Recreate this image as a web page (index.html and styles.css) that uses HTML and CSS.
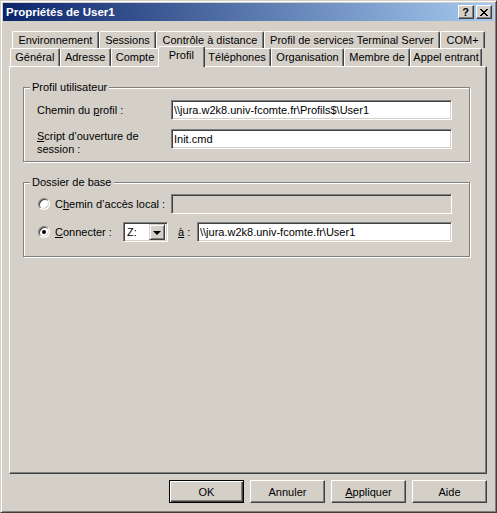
FILE: index.html
```html
<!DOCTYPE html>
<html lang="fr">
<head>
<meta charset="utf-8">
<title>Propriétés de User1</title>
<link rel="stylesheet" href="styles.css">
</head>
<body>
<div class="window">
  <div class="titlebar">
    <span class="title">Propriétés de User1</span>
    <div class="capbtns">
      <span class="capbtn help">?</span>
      <span class="capbtn close">
        <svg width="8" height="7" viewBox="0 0 8 7" shape-rendering="crispEdges" aria-hidden="true">
          <rect x="0" y="0" width="2" height="1"/><rect x="6" y="0" width="2" height="1"/>
          <rect x="1" y="1" width="2" height="1"/><rect x="5" y="1" width="2" height="1"/>
          <rect x="2" y="2" width="4" height="1"/>
          <rect x="3" y="3" width="2" height="1"/>
          <rect x="2" y="4" width="4" height="1"/>
          <rect x="1" y="5" width="2" height="1"/><rect x="5" y="5" width="2" height="1"/>
          <rect x="0" y="6" width="2" height="1"/><rect x="6" y="6" width="2" height="1"/>
        </svg>
      </span>
    </div>
  </div>

  <div class="client">
    <div class="tabrow back">
      <span class="tab">Environnement</span>
      <span class="tab">Sessions</span>
      <span class="tab">Contrôle à distance</span>
      <span class="tab">Profil de services Terminal Server</span>
      <span class="tab">COM+</span>
    </div>
    <div class="tabrow front">
      <span class="tab">Général</span>
      <span class="tab">Adresse</span>
      <span class="tab">Compte</span>
      <span class="tab sel">Profil</span>
      <span class="tab">Téléphones</span>
      <span class="tab">Organisation</span>
      <span class="tab">Membre de</span>
      <span class="tab narrow">Appel entrant</span>
    </div>

    <div class="panel">
      <div class="group g1">
        <div class="gtitle">Profil utilisateur</div>
        <div class="row">
          <span class="lbl">Chemin du <u>p</u>rofil :</span>
          <div class="field">\\jura.w2k8.univ-fcomte.fr\Profils$\User1</div>
        </div>
        <div class="row">
          <span class="lbl top"><u>S</u>cript d’ouverture de<br>session :</span>
          <div class="field">Init.cmd</div>
        </div>
      </div>

      <div class="group g2">
        <div class="gtitle">Dossier de base</div>
        <div class="row">
          <span class="radio"></span>
          <span class="rlbl">C<u>h</u>emin d’accès local :</span>
          <div class="field disabled"></div>
        </div>
        <div class="row r2">
          <span class="radio checked"></span>
          <span class="rlbl conn"><u>C</u>onnecter :</span>
          <div class="combo">
            <span class="combo-text">Z:</span>
            <span class="ddbtn"><span class="arrow"></span></span>
          </div>
          <span class="alabel"><u>à</u> :</span>
          <div class="field short">\\jura.w2k8.univ-fcomte.fr\User1</div>
        </div>
      </div>
    </div>

    <div class="buttons">
      <button class="btn default">OK</button>
      <button class="btn">Annuler</button>
      <button class="btn"><u>A</u>ppliquer</button>
      <button class="btn">Aide</button>
    </div>
  </div>
</div>
</body>
</html>
```

FILE: styles.css
```css
* { box-sizing: border-box; }
html, body { margin: 0; padding: 0; background: #D4D0C8; }
body {
  font-family: "Liberation Sans", Arial, sans-serif;
  font-size: 11px;
  color: #000;
}

.window {
  width: 497px;
  height: 513px;
  border: 1px solid;
  border-color: #D4D0C8 #404040 #404040 #D4D0C8;
  box-shadow: inset 1px 1px 0 #fff, inset -1px -1px 0 #808080;
  padding: 2px;
  background: #D4D0C8;
  display: flex;
  flex-direction: column;
}

.titlebar {
  flex: none;
  height: 18px;
  background: linear-gradient(to right, #0A246A, #A6CAF0);
  display: flex;
  align-items: center;
  padding: 0 2px 0 3px;
}
.title {
  flex: 1;
  color: #fff;
  font-weight: bold;
  font-size: 11.5px;
  white-space: nowrap;
}
.capbtns { display: flex; gap: 2px; }
.capbtn {
  width: 16px;
  height: 14px;
  background: #D4D0C8;
  border: 1px solid;
  border-color: #fff #404040 #404040 #fff;
  box-shadow: inset -1px -1px 0 #808080;
  display: flex;
  align-items: center;
  justify-content: center;
}
.capbtn.help { font-weight: bold; font-size: 11px; line-height: 12px; padding-right: 1px; }
.capbtn svg { display: block; fill: #000; margin-right: 1px; }

.client {
  padding-top: 10px;
  display: flex;
  flex-direction: column;
}

.tabrow { display: flex; }
.tabrow.back { margin-left: 9px; width: 473px; height: 17px; }
.tabrow.front { margin-left: 7px; width: 472px; height: 18px; }
.tab {
  flex: 1 1 auto;
  text-align: center;
  white-space: nowrap;
  background: #D4D0C8;
  border-top: 1px solid #fff;
  border-left: 1px solid #fff;
  border-right: 1px solid #404040;
  box-shadow: inset -1px 0 0 #808080;
  border-radius: 2px 2px 0 0;
  line-height: 16px;
  padding: 0 3px;
}
.tabrow.front .tab { line-height: 17px; }
.tabrow.front .tab.narrow { padding: 0 1px; }
.tabrow.front .tab.sel {
  position: relative;
  z-index: 1;
  margin: -2px -2px -1px;
  padding: 0 9px;
  line-height: 17px;
}

.panel {
  margin-left: 6px;
  width: 478px;
  height: 408px;
  border: 1px solid;
  border-color: #fff #404040 #404040 #fff;
  box-shadow: inset -1px -1px 0 #808080;
  padding: 0 0 0 13px;
}

.group {
  width: 447px;
  border: 1px solid #808080;
  box-shadow: inset 1px 1px 0 #fff, 1px 1px 0 #fff;
}
.gtitle {
  width: fit-content;
  line-height: 13px;
  padding: 0 2px;
  background: #D4D0C8;
  margin: -7px 0 6px -7px;
}
.g1 { margin-top: 20px; padding: 0 17px 12px 13px; }
.g2 { margin-top: 20px; padding: 0 17px 13px 13px; }
.g2 .gtitle { margin-bottom: 5px; }

.row { display: flex; align-items: center; height: 20px; }
.row + .row { margin-top: 9px; }
.g2 .row + .row { margin-top: 7px; height: 22px; }
.lbl { width: 134px; line-height: 13px; }
.lbl.top { align-self: flex-start; margin-top: 1px; }

.field {
  width: 281px;
  height: 20px;
  background: #fff;
  border: 1px solid;
  border-color: #808080 #fff #fff #808080;
  box-shadow: inset 1px 1px 0 #404040, inset -1px -1px 0 #D4D0C8;
  padding: 0 2px;
  line-height: 18px;
  white-space: nowrap;
  overflow: hidden;
}
.field.disabled { background: #D4D0C8; }
.field.short { width: 255px; }

.radio {
  flex: none;
  width: 12px;
  height: 12px;
  margin-left: 1px;
  border-radius: 50%;
  background: #fff;
  border: 1px solid;
  border-color: #808080 #fff #fff #808080;
  box-shadow: inset 1px 1px 0 #404040, inset -1px -1px 0 #D4D0C8;
  display: flex;
  align-items: center;
  justify-content: center;
}
.radio.checked::after {
  content: "";
  width: 4px;
  height: 4px;
  border-radius: 50%;
  background: #000;
}
.rlbl { flex: 1; margin-left: 5px; white-space: nowrap; }
.rlbl.conn { flex: none; width: 68px; }

.combo {
  flex: none;
  width: 45px;
  height: 20px;
  background: #fff;
  border: 1px solid;
  border-color: #808080 #fff #fff #808080;
  box-shadow: inset 1px 1px 0 #404040, inset -1px -1px 0 #D4D0C8;
  padding: 2px;
  display: flex;
  align-items: center;
}
.combo-text { flex: 1; padding-left: 1px; }
.ddbtn {
  width: 16px;
  height: 16px;
  background: #D4D0C8;
  border: 1px solid;
  border-color: #D4D0C8 #404040 #404040 #D4D0C8;
  box-shadow: inset 1px 1px 0 #fff, inset -1px -1px 0 #808080;
  display: flex;
  align-items: center;
  justify-content: center;
}
.arrow {
  width: 0;
  height: 0;
  border-left: 4px solid transparent;
  border-right: 4px solid transparent;
  border-top: 4px solid #000;
  margin-top: 1px;
}
.alabel { flex: none; width: 19px; margin-left: 10px; white-space: nowrap; }

.buttons {
  display: flex;
  justify-content: flex-end;
  gap: 6px;
  margin-left: 6px;
  width: 478px;
  margin-top: 6px;
}
.btn {
  width: 75px;
  height: 23px;
  margin: 0;
  padding: 0;
  font: inherit;
  color: #000;
  background: #D4D0C8;
  border: 1px solid;
  border-color: #fff #404040 #404040 #fff;
  box-shadow: inset -1px -1px 0 #808080;
  border-radius: 0;
}
.btn.default {
  border-color: #000;
  box-shadow: inset 1px 1px 0 #fff, inset -1px -1px 0 #404040, inset -2px -2px 0 #808080;
}
```
